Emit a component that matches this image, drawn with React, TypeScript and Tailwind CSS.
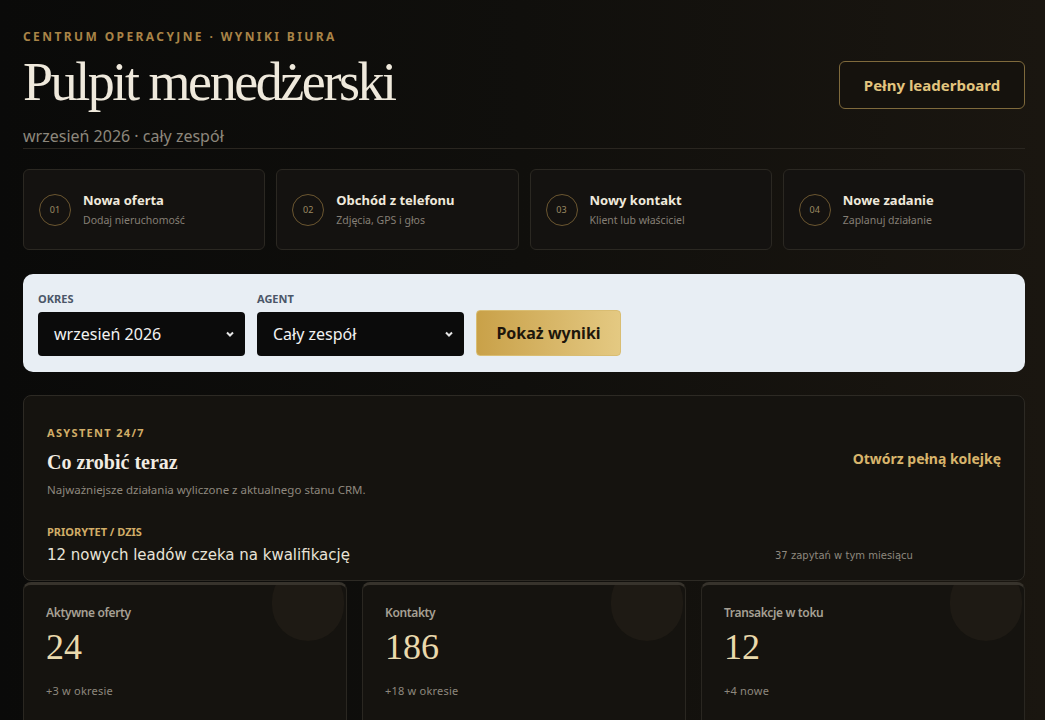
const actions = [
  { n: "01", title: "Nowa oferta", sub: "Dodaj nieruchomość" },
  { n: "02", title: "Obchód z telefonu", sub: "Zdjęcia, GPS i głos" },
  { n: "03", title: "Nowy kontakt", sub: "Klient lub właściciel" },
  { n: "04", title: "Nowe zadanie", sub: "Zaplanuj działanie" },
];

const stats = [
  { label: "Aktywne oferty", value: "24", note: "+3 w okresie" },
  { label: "Kontakty", value: "186", note: "+18 w okresie" },
  { label: "Transakcje w toku", value: "12", note: "+4 nowe" },
];

const sans = "font-['Noto_Sans','Open_Sans',sans-serif]";
const serif = "font-['Liberation_Serif','Times_New_Roman',serif]";

export default function App() {
  return (
    <div
      className={`min-h-screen bg-gradient-to-r from-[#0a0a09] via-[#100f0c] to-[#1a1610] pl-[23px] pr-[20px] pt-[29px] ${sans}`}
    >
      {/* Header */}
      <header className="flex items-start justify-between border-b border-[#2a2620] pb-[2px]">
        <div>
          <p className="text-[12px] font-bold uppercase leading-[16px] tracking-[0.2em] text-[#a98447]">
            Centrum operacyjne · Wyniki biura
          </p>
          <h1
            className={`${serif} mt-[5px] text-[54px] leading-[64px] tracking-[-0.045em] text-[#efe9dc]`}
          >
            Pulpit menedżerski
          </h1>
          <p className="mt-[12px] text-[16px] leading-[20px] text-[#8d877c]">
            wrzesień 2026 · cały zespół
          </p>
        </div>
        <button className="mt-[32px] h-[48px] w-[186px] rounded-md border border-[#7f6a3c] bg-[#15120d] text-[15px] font-bold text-[#e3c57e]">
          Pełny leaderboard
        </button>
      </header>

      {/* Quick actions */}
      <div className="mt-[20px] grid grid-cols-4 gap-[11px]">
        {actions.map((a) => (
          <div
            key={a.n}
            className="flex h-[81px] items-center gap-[12px] rounded-md border border-[#2b2822] bg-[#141210] px-[15px]"
          >
            <div className="flex h-[32px] w-[32px] shrink-0 items-center justify-center rounded-full border border-[#6b5630] text-[9px] text-[#9c8a63]">
              {a.n}
            </div>
            <div>
              <p className="text-[13px] font-bold leading-[18px] text-[#efe9dc]">{a.title}</p>
              <p className="mt-[3px] text-[10.5px] leading-[16px] text-[#857f75]">{a.sub}</p>
            </div>
          </div>
        ))}
      </div>

      {/* Filters */}
      <div className="mt-[24px] flex items-end gap-[12px] rounded-[10px] bg-[#e8eef4] px-[15px] pb-[16px] pt-[18px]">
        <label className="flex flex-col gap-[6px]">
          <span className="text-[11px] font-bold leading-[14px] text-[#4b5668]">OKRES</span>
          <div className="relative flex h-[44px] w-[207px] items-center rounded-[4px] bg-[#0b0b0b] px-[16px] text-[16px] text-[#f2f2f2]">
            wrzesień 2026
            <Chevron />
          </div>
        </label>
        <label className="flex flex-col gap-[6px]">
          <span className="text-[11px] font-bold leading-[14px] text-[#4b5668]">AGENT</span>
          <div className="relative flex h-[44px] w-[207px] items-center rounded-[4px] bg-[#0b0b0b] px-[16px] text-[16px] text-[#f2f2f2]">
            Cały zespół
            <Chevron />
          </div>
        </label>
        <button className="h-[46px] w-[145px] rounded-[4px] border border-[#d9bd72] bg-gradient-to-r from-[#c9a148] to-[#e4c982] text-[16px] font-bold text-[#1d160b]">
          Pokaż wyniki
        </button>
      </div>

      {/* Assistant */}
      <section className="mt-[23px] rounded-lg border border-[#2d2a24] bg-[#15130f] px-[23px] pb-[15px] pt-[29px]">
        <div className="flex items-start justify-between">
          <div>
            <p className="text-[11px] font-bold uppercase leading-[16px] tracking-[0.12em] text-[#d1ad67]">
              Asystent 24/7
            </p>
            <h2 className={`${serif} mt-[8px] text-[20px] font-bold leading-[26px] text-[#f1ece2]`}>
              Co zrobić teraz
            </h2>
            <p className="mt-[7px] text-[11.5px] leading-[16px] text-[#8e887e]">
              Najważniejsze działania wyliczone z aktualnego stanu CRM.
            </p>
          </div>
          <a className="mt-[23px] text-[14px] font-bold text-[#d8b56c]">Otwórz pełną kolejkę</a>
        </div>
        <div className="mt-[27px] flex items-end">
          <div className="w-[728px]">
            <p className="text-[11px] font-bold uppercase leading-[14px] text-[#d1ad67]">
              Priorytet / Dzis
            </p>
            <p className="mt-[6px] font-['DejaVu_Sans',sans-serif] text-[15px] leading-[20px] text-[#e8e3d8]">
              12 nowych leadów czeka na kwalifikację
            </p>
          </div>
          <p className="pb-[2px] font-['DejaVu_Sans',sans-serif] text-[10px] text-[#8e887e]">
            37 zapytań w tym miesiącu
          </p>
        </div>
      </section>

      {/* Stats */}
      <div className="mt-[1px] grid grid-cols-3 gap-[15px]">
        {stats.map((s) => (
          <div
            key={s.label}
            className="relative h-[150px] overflow-hidden rounded-lg border border-t-[3px] border-[#2a2721] border-t-[#37332c] bg-[#15130f] px-[22px] pt-[19px]"
          >
            <div className="absolute -top-[20px] right-[2px] h-[76px] w-[72px] rounded-full bg-[#1e1a14]" />
            <p className="relative text-[12px] font-semibold tracking-[-0.03em] text-[#a6a094]">{s.label}</p>
            <p className={`${serif} relative mt-[5px] text-[36px] leading-[40px] text-[#ead9ac]`}>{s.value}</p>
            <p className="relative mt-[16px] text-[11px] tracking-[0.02em] text-[#8e887e]">{s.note}</p>
          </div>
        ))}
      </div>
    </div>
  );
}

function Chevron() {
  return (
    <svg
      className="absolute right-[10px] top-1/2 -translate-y-1/2"
      width="10"
      height="10"
      viewBox="0 0 10 10"
      fill="none"
      stroke="#e5e5e5"
      strokeWidth="2"
    >
      <path d="M2 3.5 5 6.5 8 3.5" />
    </svg>
  );
}
